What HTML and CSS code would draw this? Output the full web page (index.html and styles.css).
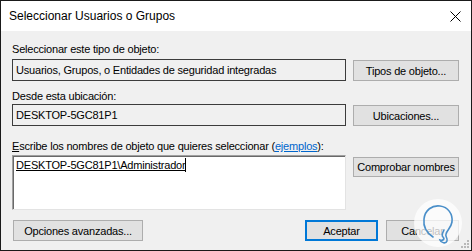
FILE: index.html
```html
<!DOCTYPE html>
<html lang="es">
<head>
    <meta charset="UTF-8">
    <title>Seleccionar Usuarios o Grupos</title>
    <link rel="stylesheet" href="styles.css">
</head>
<body>
    <div class="window">
        <div class="titlebar">
            <span class="title">Seleccionar Usuarios o Grupos</span>
            <svg class="close" width="11" height="11" viewBox="0 0 11 11">
                <path d="M0.5 0.5 L10.5 10.5 M10.5 0.5 L0.5 10.5" stroke="#000" stroke-width="1" fill="none"/>
            </svg>
        </div>
        <div class="body">
            <div class="form">
                <div class="label">Seleccionar este tipo de objeto:</div>
                <div class="field readonly">Usuarios, Grupos, o Entidades de seguridad integradas</div>
                <button class="btn btn-side">Tipos de objeto...</button>

                <div class="label second">Desde esta ubicación:</div>
                <div class="field readonly">DESKTOP-5GC81P1</div>
                <button class="btn btn-side">Ubicaciones...</button>

                <div class="label third"><u>E</u>scribe los nombres de objeto que quieres seleccionar (<a href="#" class="link">ejemplos</a>):</div>
                <div class="names">
                    <span class="resolved">DESKTOP-5GC81P1\Administrador</span><span class="caret"></span>
                </div>
                <button class="btn btn-side btn-check">Comprobar nombres</button>
            </div>
            <div class="actions">
                <button class="btn btn-adv">Opciones avanzadas...</button>
                <div class="spacer"></div>
                <button class="btn btn-ok">Aceptar</button>
                <button class="btn btn-cancel">Cancelar</button>
            </div>
        </div>
        <!-- marca de agua en la esquina -->
        <svg class="watermark" width="50" height="52" viewBox="0 0 50 52">
            <circle cx="25" cy="26" r="24" fill="#ffffff" fill-opacity="0.75"/>
            <path d="M20 40 C14 36 10 30 11 22 C12 13 19 8 27 9 C35 10 40 17 39 25 C38 31 34 33 33 37 C32 40 35 41 34 44 C33 47 28 46 27 43 C30 44 32 42 30 40 C28 38 30 35 31 33"
                  stroke="#4a8fc9" stroke-width="1.6" fill="none" stroke-linecap="round"/>
        </svg>
        <svg class="grip" width="8" height="8" viewBox="0 0 8 8">
            <rect x="6" y="0" width="2" height="2" fill="#b8b8b8"/>
            <rect x="3" y="3" width="2" height="2" fill="#b8b8b8"/>
            <rect x="6" y="3" width="2" height="2" fill="#b8b8b8"/>
            <rect x="0" y="6" width="2" height="2" fill="#b8b8b8"/>
            <rect x="3" y="6" width="2" height="2" fill="#b8b8b8"/>
            <rect x="6" y="6" width="2" height="2" fill="#b8b8b8"/>
        </svg>
    </div>
</body>
</html>
```

FILE: styles.css
```css
body {
    margin: 0;
    font-family: "Liberation Sans", Arial, sans-serif;
    font-size: 11px;
    letter-spacing: -0.2px;
    color: #000;
    background: #fff;
}
.window {
    position: relative;
    width: 470px;
    height: 249px;
    border: 1px solid #1a1a1a;
    display: flex;
    flex-direction: column;
    background: #f0f0f0;
    overflow: hidden;
}
.titlebar {
    height: 30px;
    background: #fff;
    display: flex;
    align-items: center;
    padding: 0 10px 0 8px;
    flex-shrink: 0;
}
.title {
    flex: 1;
    font-size: 12px;
    letter-spacing: 0;
    padding-bottom: 1px;
}
.close {
    display: block;
}
.body {
    flex: 1;
    display: flex;
    flex-direction: column;
    padding: 10px 11px 9px 11px;
}
.form {
    display: grid;
    grid-template-columns: 334px 106px;
    column-gap: 7px;
}
.label {
    grid-column: 1 / 3;
    height: 16px;
    line-height: 16px;
    margin-bottom: 2px;
}
.label.second {
    margin-top: 7px;
    margin-bottom: 0;
}
.label.third {
    margin-top: 12px;
    margin-bottom: 1px;
}
.link {
    color: #0066cc;
}
.field {
    height: 22px;
    box-sizing: border-box;
    border: 1px solid #3c3c3c;
    padding: 0 3px;
    line-height: 20px;
    white-space: nowrap;
}
.readonly {
    background: #f0f0f0;
}
.btn {
    font-family: inherit;
    font-size: 11px;
    letter-spacing: -0.2px;
    color: #000;
    background: #e1e1e1;
    border: 1px solid #adadad;
    height: 21px;
    padding: 0;
    margin: 0;
    box-sizing: border-box;
    white-space: nowrap;
}
.btn-side {
    align-self: start;
    margin-top: 1px;
}
.btn-check {
    margin-top: 2px;
    height: 20px;
}
.names {
    height: 55px;
    box-sizing: border-box;
    background: #fff;
    border-top: 1px solid #a0a0a0;
    border-left: 1px solid #a0a0a0;
    border-right: 1px solid #e3e3e3;
    border-bottom: 1px solid #e3e3e3;
    box-shadow: inset 1px 1px 0 #696969;
    padding: 2px 3px;
    line-height: 15px;
}
.resolved {
    text-decoration: underline;
}
.caret {
    display: inline-block;
    width: 1px;
    height: 14px;
    background: #000;
    vertical-align: -3px;
}
.actions {
    display: flex;
    margin-top: 10px;
    gap: 8px;
    padding-left: 1px;
}
.spacer {
    flex: 1;
}
.btn-adv {
    width: 130px;
}
.btn-ok {
    width: 73px;
    border: 2px solid #0078d7;
}
.btn-cancel {
    width: 73px;
    margin-right: 1px;
}
/* marca de agua encima del botón Cancelar */
.watermark {
    position: absolute;
    right: 8px;
    bottom: 1px;
}
.grip {
    position: absolute;
    right: 2px;
    bottom: 2px;
}
```
